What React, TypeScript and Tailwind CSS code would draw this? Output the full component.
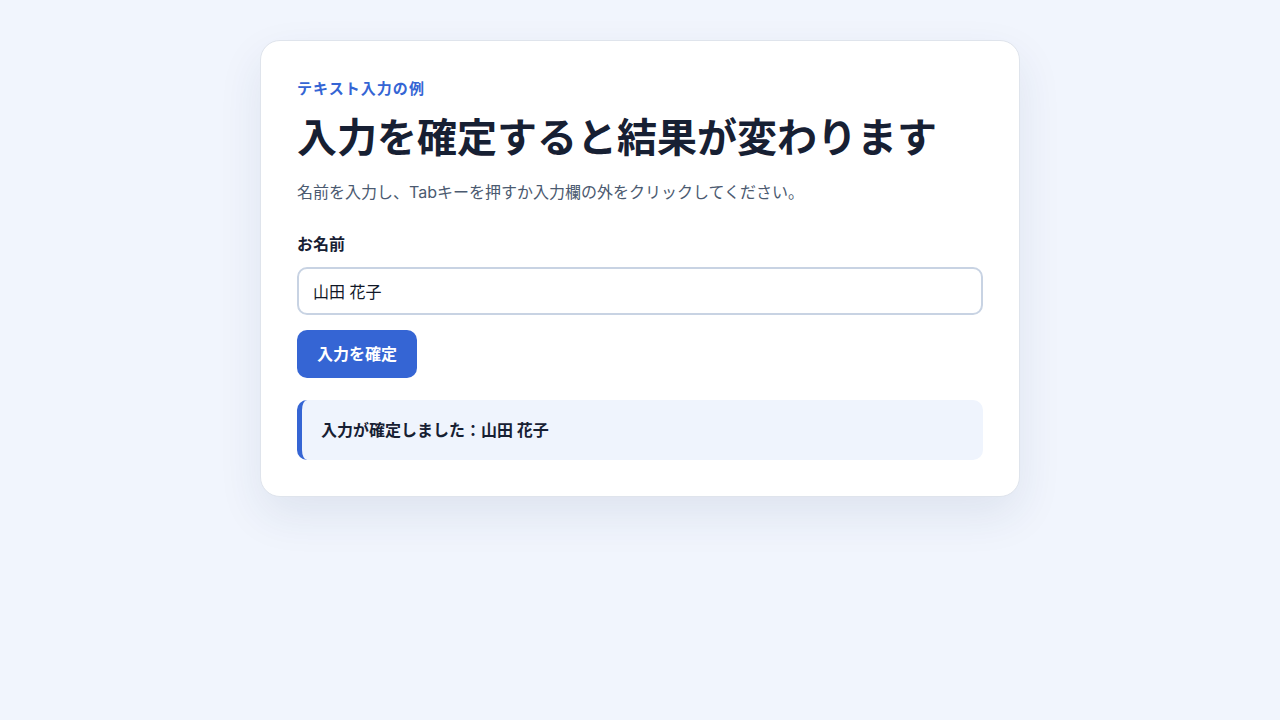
export default function App() {
  return (
    <div
      className="min-h-screen bg-[#f1f5fd] pt-10"
      style={{ fontFamily: 'Inter, "Noto Sans CJK JP", sans-serif' }}
    >
      <div className="mx-auto w-[760px] rounded-[20px] border border-[#dfe4ec] bg-white p-9 shadow-[0_18px_45px_rgba(30,50,100,0.09)]">
        <p className="text-[15px] font-bold leading-6 tracking-[0.07em] text-[#3565d4]">
          テキスト入力の例
        </p>
        <h1 className="mt-3 text-[40px] font-bold leading-[50px] text-[#172033]">
          入力を確定すると結果が変わります
        </h1>
        <p className="mt-[17px] text-base leading-6 text-[#4b5a70]">
          名前を入力し、Tabキーを押すか入力欄の外をクリックしてください。
        </p>

        <label className="mt-[29px] block text-base font-bold leading-[22px] text-[#172033]">
          お名前
        </label>
        <input
          defaultValue="山田 花子"
          className="mt-3 block h-12 w-full rounded-[10px] border-2 border-[#c8d3e3] bg-white px-3.5 text-base text-[#111827] outline-none"
        />
        <button className="mt-[15px] block h-12 rounded-[10px] bg-[#3565d4] px-5 text-base font-bold text-white">
          入力を確定
        </button>

        <div className="mt-[22px] flex h-[60px] items-center rounded-[10px] border-l-[5px] border-[#3565d4] bg-[#eff4fd] pl-[19px]">
          <p className="text-base font-bold text-[#172033]">
            入力が確定しました：山田 花子
          </p>
        </div>
      </div>
    </div>
  );
}
